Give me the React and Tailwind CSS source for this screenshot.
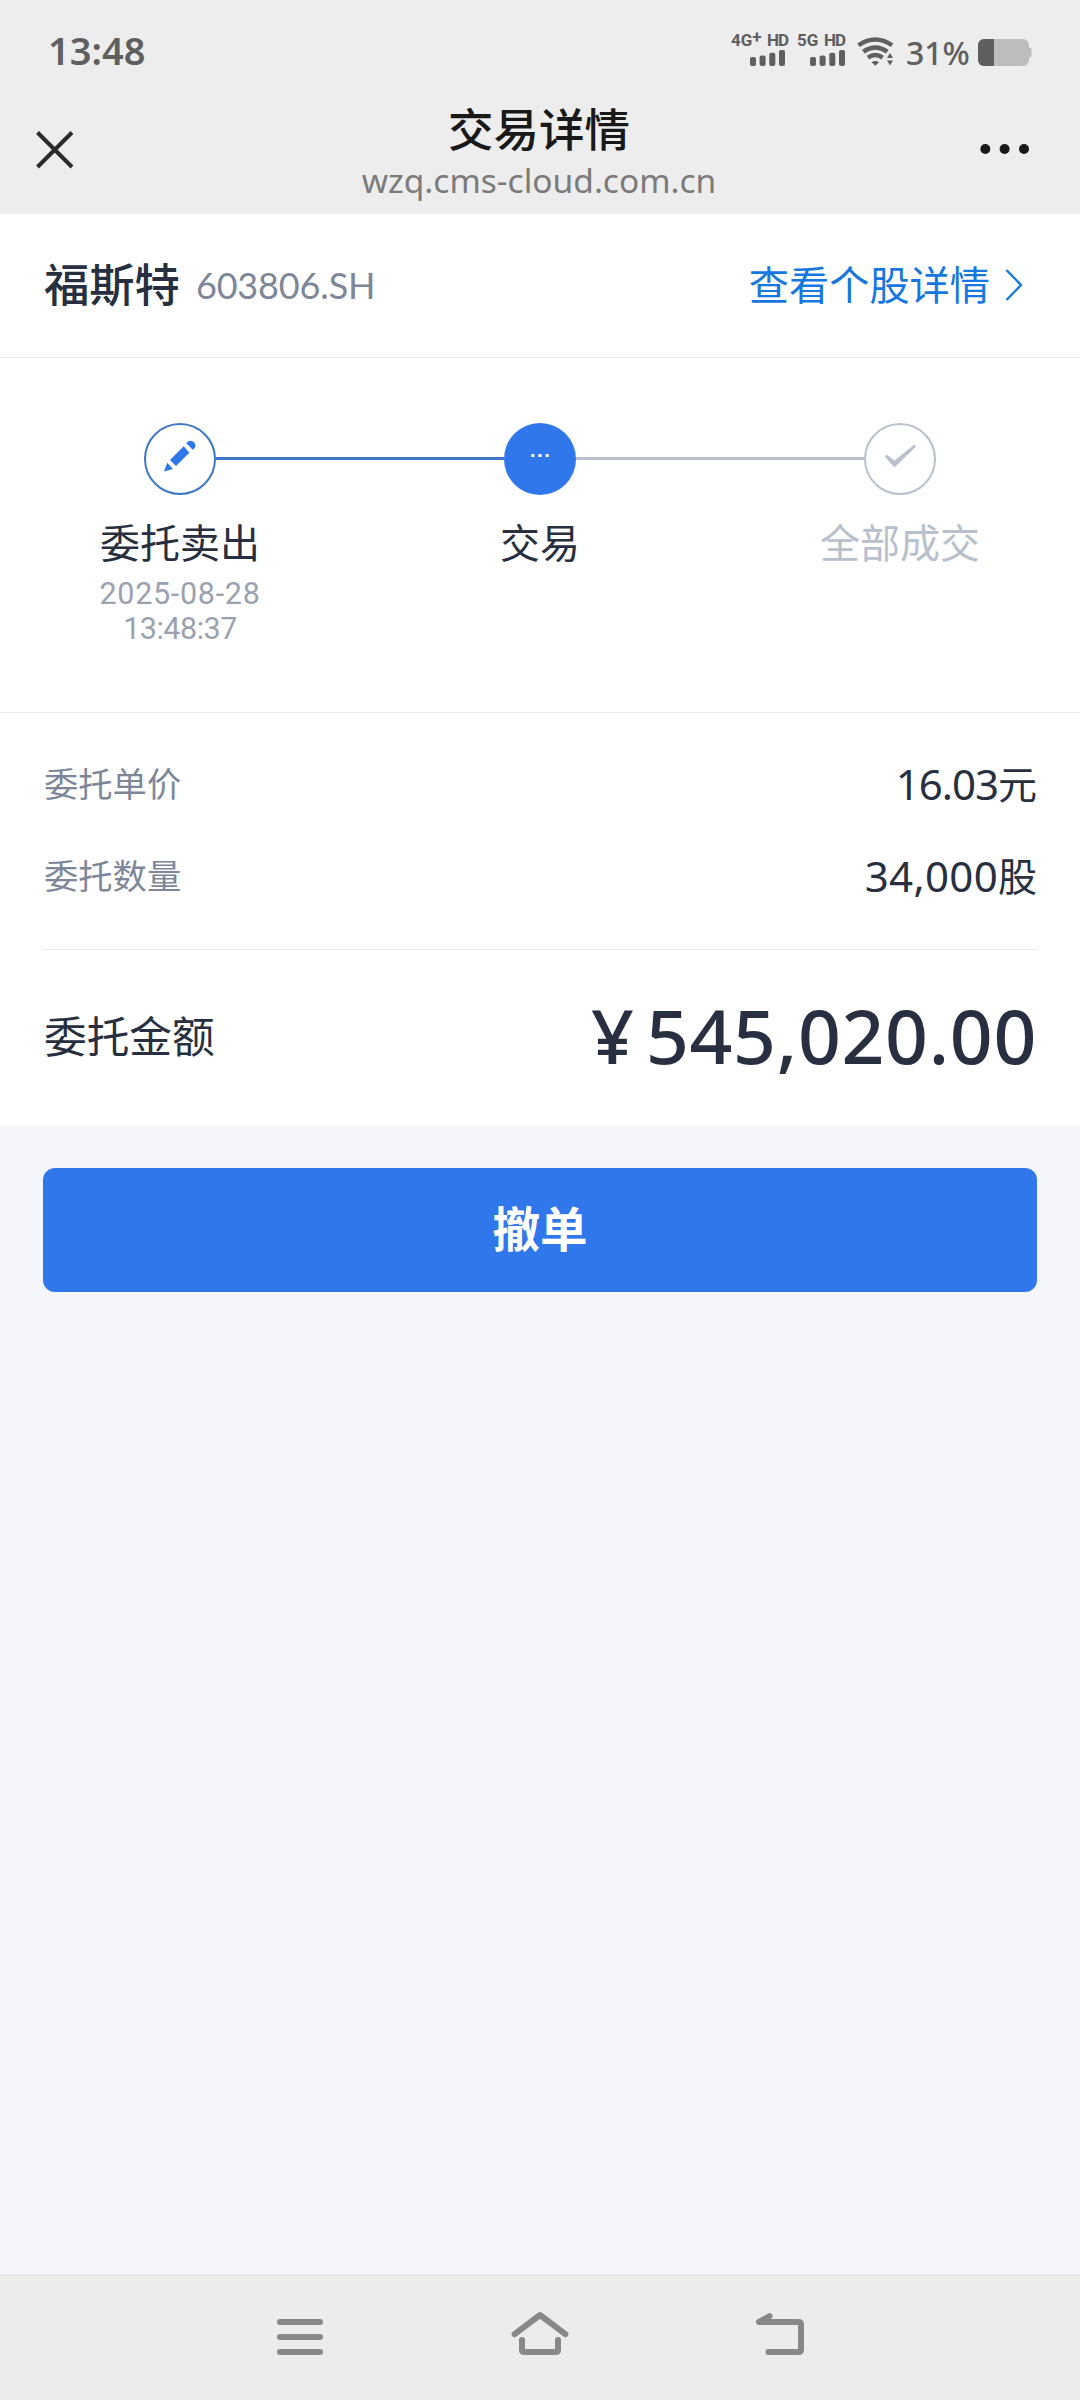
import React from 'react';

const SignalBars = ({ className = '' }) => (
    <svg width="35" height="16" viewBox="0 0 35 16" fill="currentColor" className={className}>
        <rect x="0" y="7" width="6" height="9" rx="2" />
        <rect x="9.6" y="5.4" width="6" height="10.6" rx="2" />
        <rect x="19.3" y="2.7" width="6" height="13.3" rx="2" />
        <rect x="29" y="0" width="6" height="16" rx="2" />
    </svg>
);

const WifiIcon = () => (
    <svg width="37" height="30" viewBox="0 0 37 30" fill="none" stroke="currentColor">
        <path d="M1.5 8.2Q18.3 -3.4 35.1 8.2" strokeWidth="4.4" />
        <path d="M6.3 14.6Q18.3 6.4 30.3 14.6" strokeWidth="4.4" />
        <path d="M11 20.6Q18.3 15.4 25.6 20.6" strokeWidth="4.4" />
        <path d="M14.6 25.2Q18.3 22.6 22 25.2L18.3 28.8Z" fill="currentColor" stroke="none" />
        <path d="M30 21l3-5 3 5zM30 23.4h6l-3 5z" fill="currentColor" stroke="none" />
    </svg>
);

const BatteryIcon = () => (
    <svg width="54" height="27" viewBox="0 0 54 27">
        <rect x="48" y="8.5" width="5.5" height="10" rx="2" fill="#bdbdbd" />
        <rect width="51" height="27" rx="6" fill="#bdbdbd" />
        <path d="M16 0H6a6 6 0 0 0-6 6V21a6 6 0 0 0 6 6H16z" fill="#5f5f5f" />
    </svg>
);

const PencilIcon = () => (
    <svg width="72" height="72" viewBox="0 0 72 72" fill="#2f77ea" className="-m-[2px] shrink-0">
        <path d="M20 48.6l3.2-8.9 5.8 6.3zM26 37l13.7-13.7 5.6 6.4L32 43zM42.3 20.3l2-2a4.8 4.8 0 0 1 6.4 6.6l-2 1.9z" />
    </svg>
);

const DotsIcon = () => (
    <svg width="72" height="72" viewBox="0 0 72 72" fill="#fff">
        <rect x="27.2" y="31" width="3.2" height="3" />
        <rect x="34.4" y="31" width="3.2" height="3" />
        <rect x="41.6" y="31" width="3.2" height="3" />
    </svg>
);

const CheckIcon = () => (
    <svg width="72" height="72" viewBox="0 0 72 72" fill="#b8c0ce" className="-m-[2px] shrink-0">
        <path d="M20.8 33.6q.8-2 2.6-1.4l7.2 5.4L49.8 22q2-.4 2 1.8L30.4 44.4z" />
    </svg>
);

const Step = ({ left, right, circle, icon, label, labelColor, children }) => (
    <div className="flex flex-col items-center">
        <div className="flex w-full items-center">
            <div className={`h-[3px] flex-1 -mt-px ${left}`} />
            <div className={`w-[72px] h-[72px] rounded-full flex items-center justify-center shrink-0 ${circle}`}>
                {icon}
            </div>
            <div className={`h-[3px] flex-1 -mt-px ${right}`} />
        </div>
        <p className={`mt-[18px] text-[40px] leading-[60px] ${labelColor}`}>{label}</p>
        {children}
    </div>
);

const Row = ({ label, number, unit, tracking }) => (
    <div className="flex h-[92px] items-center justify-between">
        <span className="ml-px text-[34.3px] text-[#7d8799]">{label}</span>
        <span className="flex items-center text-[#272f40]">
            <span className={`-mt-[2px] text-[42px] ${tracking}`}>{number}</span>
            <span className="text-[39px]">{unit}</span>
        </span>
    </div>
);

export default function App() {
    return (
        <div className="flex h-[2400px] w-[1080px] flex-col overflow-hidden bg-[#f4f6fb] font-['Noto_Sans','Noto_Sans_CJK_SC',sans-serif]">
            <header className="h-[214px] shrink-0 bg-[#ededed]">
                {/* Status bar */}
                <div className="flex h-[99px] justify-between px-[48px] text-[#5f5f5f]">
                    <span className="mt-[24px] text-[38px] leading-[52px] font-semibold">13:48</span>
                    <div className="flex">
                        <div className="mt-[32px] w-[57px] font-['Roboto',sans-serif] text-[17px] leading-[17px] font-bold">
                            <div className="flex justify-between">
                                <span className="flex">4G<span className="-mt-[3px]">+</span></span>
                                <span className="-ml-[4px] tracking-[-1px]">HD</span>
                            </div>
                            <SignalBars className="ml-[19px] mt-[1px]" />
                        </div>
                        <div className="mt-[32px] ml-[9px] w-[48px] font-['Roboto',sans-serif] text-[17px] leading-[17px] font-bold">
                            <div className="flex justify-between">
                                <span>5G</span>
                                <span className="tracking-[-1px]">HD</span>
                            </div>
                            <SignalBars className="ml-[13px] mt-[1px]" />
                        </div>
                        <div className="mt-[37px] ml-[12px]"><WifiIcon /></div>
                        <span className="mt-[31px] ml-[12px] w-[72px] text-[32px] leading-[44px] font-medium">31%</span>
                        <div className="mt-[39px]"><BatteryIcon /></div>
                    </div>
                </div>
                {/* Title bar */}
                <div className="flex pl-[36px] pr-[51px]">
                    <div className="w-[202px] pt-[32px]">
                        <svg width="38" height="38" viewBox="0 0 38 38" stroke="#2b2b2b" strokeWidth="4">
                            <path d="M1.5 1.5l34.5 34.5M36 1.5l-34.5 34.5" />
                        </svg>
                    </div>
                    <div className="flex w-[602px] flex-col items-center">
                        <h1 className="text-[45.5px] leading-[60px] font-medium text-[#191919]">交易详情</h1>
                        <p className="text-[33.5px] leading-[42px] text-[#7b7b7b]">wzq.cms-cloud.com.cn</p>
                    </div>
                    <div className="flex flex-1 justify-end pt-[45px]">
                        <svg width="50" height="10" viewBox="0 0 50 10" fill="#191919">
                            <circle cx="6.3" cy="5" r="5" />
                            <circle cx="25.6" cy="5" r="5" />
                            <circle cx="45" cy="5" r="5" />
                        </svg>
                    </div>
                </div>
            </header>

            <main className="shrink-0 bg-white">
                {/* Stock */}
                <div className="flex h-[144px] items-center justify-between border-b border-[#e8e9eb] pl-[44px] pr-[57px]">
                    <div className="flex items-center pb-[2px]">
                        <span className="text-[45.3px] font-medium text-[#272f40]">福斯特</span>
                        <span className="ml-[16px] font-['Lato','Noto_Sans',sans-serif] text-[36px] tracking-[-0.15px] text-[#7d8799]">603806.SH</span>
                    </div>
                    <div className="flex items-center text-[#1677e0]">
                        <span className="text-[40.2px]">查看个股详情</span>
                        <svg width="18" height="32" viewBox="0 0 18 32" className="ml-[15px]" fill="none" stroke="currentColor" strokeWidth="2.4">
                            <path d="M1.5 1l14.5 15-14.5 15" />
                        </svg>
                    </div>
                </div>

                {/* Progress */}
                <div className="grid h-[355px] grid-cols-3 border-b border-[#e8e9eb] pt-[65px]">
                    <Step
                        left="bg-transparent"
                        right="bg-[#3f77c8]"
                        circle="border-2 border-[#3f77c8]"
                        icon={<PencilIcon />}
                        label="委托卖出"
                        labelColor="text-[#272f40]"
                    >
                        <div className="mt-[3px] text-center font-['Roboto',sans-serif] text-[30.5px] leading-[35px] text-[#9aa2b1]">
                            <p className="tracking-[0.7px]">2025-08-28</p>
                            <p className="tracking-[-0.5px]">13:48:37</p>
                        </div>
                    </Step>
                    <Step
                        left="bg-[#3f77c8]"
                        right="bg-[#b8c0ce]"
                        circle="bg-[#2f77ea]"
                        icon={<DotsIcon />}
                        label="交易"
                        labelColor="text-[#272f40]"
                    />
                    <Step
                        left="bg-[#b8c0ce]"
                        right="bg-transparent"
                        circle="border-2 border-[#b8c0ce]"
                        icon={<CheckIcon />}
                        label="全部成交"
                        labelColor="text-[#b8c0ce]"
                    />
                </div>

                {/* Order details */}
                <div className="px-[43px]">
                    <div className="h-[237px] border-b border-[#e8e9eb] pt-[25px]">
                        <Row label="委托单价" number="16.03" unit="元" tracking="tracking-[-1px]" />
                        <Row label="委托数量" number="34,000" unit="股" tracking="tracking-[0.3px]" />
                    </div>
                    <div className="flex h-[175px] items-center justify-between text-[#272f40]">
                        <span className="ml-px text-[42.7px]">委托金额</span>
                        <span className="-mt-[5px] flex text-[75px] font-medium">
                            <span className="mr-[12px]">¥</span>
                            <span className="tracking-[0.7px]">545,020.00</span>
                        </span>
                    </div>
                </div>
            </main>

            <div className="flex-1 px-[43px] pt-[43px]">
                <button className="h-[124px] w-full rounded-[12px] bg-[#2f77ea] pb-[2px] text-[47.5px] font-bold text-white">撤单</button>
            </div>

            {/* System navigation */}
            <nav className="grid h-[126px] shrink-0 grid-cols-[60px_60px_60px] justify-center gap-[180px] bg-[#ececec] pt-[36px]">
                <svg width="60" height="50" viewBox="0 0 60 50" fill="none" stroke="#888" strokeWidth="6" strokeLinecap="round">
                    <path d="M10 12H50M10 27H50M10 42H50" />
                </svg>
                <svg width="60" height="50" viewBox="0 0 60 50" fill="none" stroke="#888" strokeWidth="6" strokeLinecap="round" strokeLinejoin="round">
                    <path d="M4.6 24.2L30 5 55.4 24.2M12 30V40q0 2 2 2H46q2 0 2-2V30" />
                </svg>
                <svg width="60" height="50" viewBox="0 0 60 50" fill="none" stroke="#888" strokeWidth="6" strokeLinecap="round" strokeLinejoin="round">
                    <path d="M19.5 6.2L9 12H48.5q2.5 0 2.5 2.5V39.5q0 2.5-2.5 2.5H18.5" />
                </svg>
            </nav>
        </div>
    );
}
